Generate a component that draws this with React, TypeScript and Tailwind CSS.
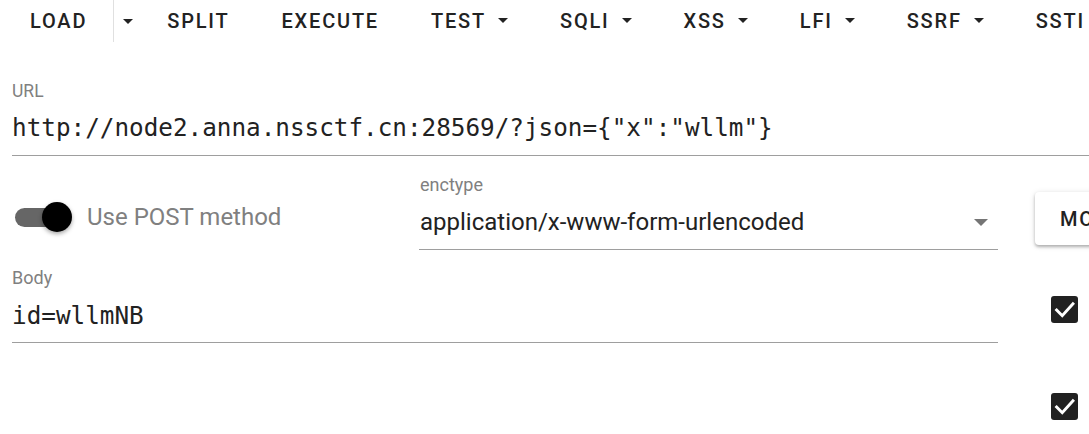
import React from "react";

const Caret = ({ className = "" }: { className?: string }) => (
  <svg width="10" height="5" viewBox="0 0 10 5" className={className}>
    <path d="M0 0 L10 0 L5 5 Z" fill="#222" />
  </svg>
);

const NavBtn = ({ label, caret }: { label: string; caret?: boolean }) => (
  <div className="shrink-0 flex items-center px-[26px] h-full text-[20px] font-medium tracking-[0.09em] text-[#222]">
    <span>{label}</span>
    {caret && <Caret className="ml-[12px] mb-[1px]" />}
  </div>
);

const Check = () => (
  <div className="w-[27px] h-[27px] rounded-[3px] bg-[#212121] flex items-center justify-center">
    <svg width="27" height="27" viewBox="0 0 24 24">
      <path d="M5 12.5 L10 17.5 L19.5 7" stroke="white" strokeWidth="2.6" fill="none" strokeLinecap="square" strokeLinejoin="miter" />
    </svg>
  </div>
);

export default function App() {
  const mono = "font-['DejaVu_Sans_Mono','Liberation_Mono',monospace]";
  return (
    <div className="w-[1089px] h-[434px] overflow-hidden bg-white font-['Roboto','Noto_Sans',sans-serif] text-[#222]">
      {/* toolbar */}
      <div className="flex h-[42px] items-center whitespace-nowrap">
        <div className="shrink-0 flex items-center h-full pl-[30px] pr-[26px] text-[20px] font-medium tracking-[0.09em]">LOAD</div>
        <div className="shrink-0 w-px h-full bg-[#e0e0e0]" />
        <div className="shrink-0 flex items-center justify-center h-full w-[27px]">
          <Caret />
        </div>
        <NavBtn label="SPLIT" />
        <NavBtn label="EXECUTE" />
        <NavBtn label="TEST" caret />
        <NavBtn label="SQLI" caret />
        <NavBtn label="XSS" caret />
        <NavBtn label="LFI" caret />
        <NavBtn label="SSRF" caret />
        <NavBtn label="SSTI" />
      </div>

      {/* URL */}
      <div className="ml-[12px] w-[1100px] mt-[39px]">
        <div className="text-[17.5px] leading-[20px] text-[#808080]">URL</div>
        <div className={`${mono} text-[24.3px] leading-[32px] mt-[11px] text-[#222] whitespace-nowrap`}>
          {'http://node2.anna.nssctf.cn:28569/?json={"x":"wllm"}'}
        </div>
        <div className="h-px bg-[#9e9e9e] mt-[11px]" />
      </div>

      <div className="flex mt-[19px]">
        <div className="ml-[12px] w-[986px]">
          <div className="flex">
            <div className="w-[407px] flex items-center self-start pt-[27px]">
              <div className="relative w-[60px] h-[30px] flex items-center">
                <div className="ml-[3px] w-[48px] h-[19px] rounded-full bg-[#666]" />
                <div className="absolute left-[30px] top-0 w-[30px] h-[30px] rounded-full bg-black shadow-[0_2px_4px_rgba(0,0,0,0.35)]" />
              </div>
              <span className="ml-[15px] text-[24px] leading-[30px] text-[#808080]">Use POST method</span>
            </div>
            <div className="w-[579px]">
              <div className="text-[18px] leading-[20px] text-[#808080] pl-[1px]">enctype</div>
              <div className="flex items-center justify-between h-[38px] mt-[8px]">
                <span className="text-[24px] text-[#222] pl-[1px]">application/x-www-form-urlencoded</span>
                <svg width="14" height="7" viewBox="0 0 14 7" className="mr-[10px]">
                  <path d="M0 0 L14 0 L7 7 Z" fill="#757575" />
                </svg>
              </div>
              <div className="h-px bg-[#9e9e9e] mt-[8px]" />
            </div>
          </div>

          <div className="mt-[18px]">
            <div className="text-[18px] leading-[20px] text-[#808080]">Body</div>
            <div className={`${mono} text-[24.3px] leading-[32px] mt-[12px] text-[#222]`}>id=wllmNB</div>
            <div className="h-px bg-[#9e9e9e] mt-[10px]" />
          </div>
        </div>

        <div className="ml-[37px] flex-1 flex flex-col">
          <div className="mt-[17px] h-[53px] w-[80px] rounded-[4px] bg-white shadow-[0_2px_3px_rgba(0,0,0,0.25),0_1px_6px_rgba(0,0,0,0.12)] flex items-center pl-[25px] text-[20px] font-medium tracking-[0.09em] whitespace-nowrap overflow-hidden">
            MODE
          </div>
          <div className="ml-[16px] mt-[51px]">
            <Check />
          </div>
          <div className="ml-[16px] mt-[70px]">
            <Check />
          </div>
        </div>
      </div>
    </div>
  );
}
